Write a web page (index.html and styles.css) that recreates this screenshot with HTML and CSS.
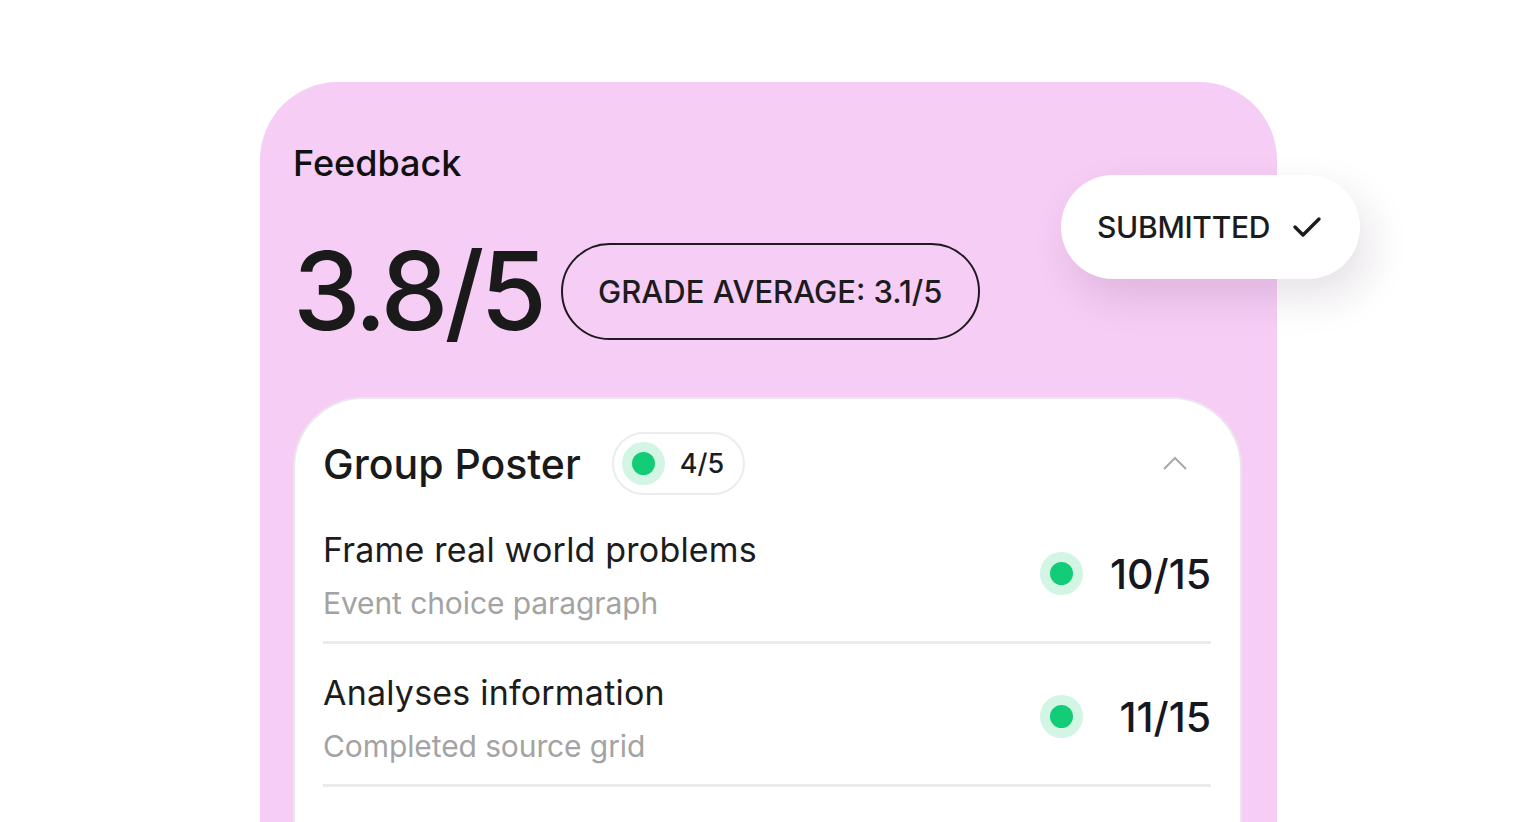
FILE: index.html
```html
<!DOCTYPE html>
<html>
<head>
<meta charset="utf-8">
<link rel="stylesheet" href="styles.css">
</head>
<body>
<div class="page">
  <div class="card">
    <h1 class="title">Feedback</h1>
    <div class="score-row">
      <div class="score">3.8/5</div>
      <div class="avg-pill">GRADE AVERAGE: 3.1/5</div>
    </div>
    <div class="submitted">
      <span>SUBMITTED</span>
      <svg class="check" width="30" height="24" viewBox="0 0 30 24"><polyline points="3,12 11,20 27,4" fill="none" stroke="#1c1c1c" stroke-width="3.4" stroke-linecap="round" stroke-linejoin="round"/></svg>
    </div>
    <div class="inner">
      <div class="inner-head">
        <div class="group-title">Group Poster</div>
        <div class="badge"><span class="dot"></span><span class="badge-text">4/5</span></div>
        <svg class="chevron" width="24" height="16" viewBox="0 0 24 16"><polyline points="1,13 12,2 23,13" fill="none" stroke="#a9a9a9" stroke-width="2"/></svg>
      </div>
      <div class="row">
        <div class="row-text">
          <div class="row-title">Frame real world problems</div>
          <div class="row-sub">Event choice paragraph</div>
        </div>
        <span class="dot"></span>
        <div class="row-score">10/15</div>
      </div>
      <div class="row">
        <div class="row-text">
          <div class="row-title">Analyses information</div>
          <div class="row-sub">Completed source grid</div>
        </div>
        <span class="dot"></span>
        <div class="row-score">11/15</div>
      </div>
      <div class="row">
        <div class="row-text">
          <div class="row-title">Evaluates sources</div>
          <div class="row-sub">Source evaluation</div>
        </div>
        <span class="dot"></span>
        <div class="row-score">12/15</div>
      </div>
    </div>
  </div>
</div>
</body>
</html>
```
FILE: styles.css
```css
html, body {
  margin: 0;
  padding: 0;
  background: #ffffff;
  overflow: hidden;
  height: 822px;
}
body {
  font-family: Inter, "Noto Sans", sans-serif;
  color: #1c1c1c;
}
.page {
  padding-top: 82px;
  padding-left: 260px;
}
.card {
  position: relative;
  width: 1017px;
  height: 740px;
  box-sizing: border-box;
  background: #f6cdf5;
  border-radius: 78px 78px 0 0;
  padding: 59px 35px 0 33px;
}
.title {
  margin: 0;
  font-size: 36px;
  line-height: 44px;
  font-weight: 500;
  color: #111;
}
.score-row {
  display: flex;
  align-items: center;
  margin-top: 52px;
  height: 108px;
}
.score {
  font-size: 108px;
  line-height: 108px;
  font-weight: 500;
  letter-spacing: -4px;
  color: #1a1a1a;
}
.avg-pill {
  margin-left: 18px;
  height: 97px;
  box-sizing: border-box;
  border: 2px solid #1f1a1f;
  border-radius: 50px;
  padding: 0 35px;
  display: flex;
  align-items: center;
  font-size: 31px;
  font-weight: 500;
  letter-spacing: 0;
  color: #1c1c1c;
}
.submitted {
  position: absolute;
  left: 801px;
  top: 93px;
  width: 299px;
  height: 104px;
  box-sizing: border-box;
  background: #fff;
  border-radius: 52px;
  box-shadow: 10px 18px 40px rgba(60, 30, 60, 0.13);
  display: flex;
  align-items: center;
  padding-left: 36px;
  font-size: 30px;
  font-weight: 500;
  letter-spacing: -0.3px;
  color: #1c1c1c;
  z-index: 2;
}
.check {
  margin-left: 22px;
}
.inner {
  margin-top: 52px;
  background: #fff;
  border: 2px solid #ebe6ea;
  border-bottom: none;
  border-radius: 70px 70px 0 0;
  padding: 33px 29px 0 28px;
  height: 600px;
}
.inner-head {
  display: flex;
  align-items: center;
  height: 63px;
  margin-bottom: 6px;
}
.group-title {
  font-size: 41px;
  font-weight: 500;
  letter-spacing: 0;
  color: #1a1a1a;
}
.badge {
  margin-left: 31px;
  height: 63px;
  box-sizing: border-box;
  border: 2px solid #ececec;
  border-radius: 32px;
  display: flex;
  align-items: center;
  padding: 0 19px 0 8px;
}
.dot {
  width: 23px;
  height: 23px;
  border-radius: 50%;
  background: #13cc77;
  border: 10px solid #d2f5e4;
  flex: none;
}
.badge-text {
  margin-left: 15px;
  font-size: 27px;
  font-weight: 500;
  color: #1c1c24;
}
.chevron {
  margin-left: auto;
  margin-right: 24px;
}
.row {
  display: flex;
  align-items: center;
  height: 143px;
  box-sizing: border-box;
  padding: 29px 0 24px;
  border-bottom: 3px solid #ebebeb;
}
.row-text {
  flex: 1;
  align-self: flex-start;
}
.row-title {
  font-size: 34px;
  line-height: 40px;
  font-weight: 400;
  letter-spacing: 0.2px;
  color: #1c1c1c;
}
.row-sub {
  margin-top: 13px;
  font-size: 30px;
  line-height: 40px;
  color: #a3a3a3;
  letter-spacing: -0.1px;
}
.row-score {
  width: 103px;
  margin-left: 25px;
  text-align: right;
  font-size: 41px;
  font-weight: 500;
  letter-spacing: 0;
  color: #17171f;
}
```
